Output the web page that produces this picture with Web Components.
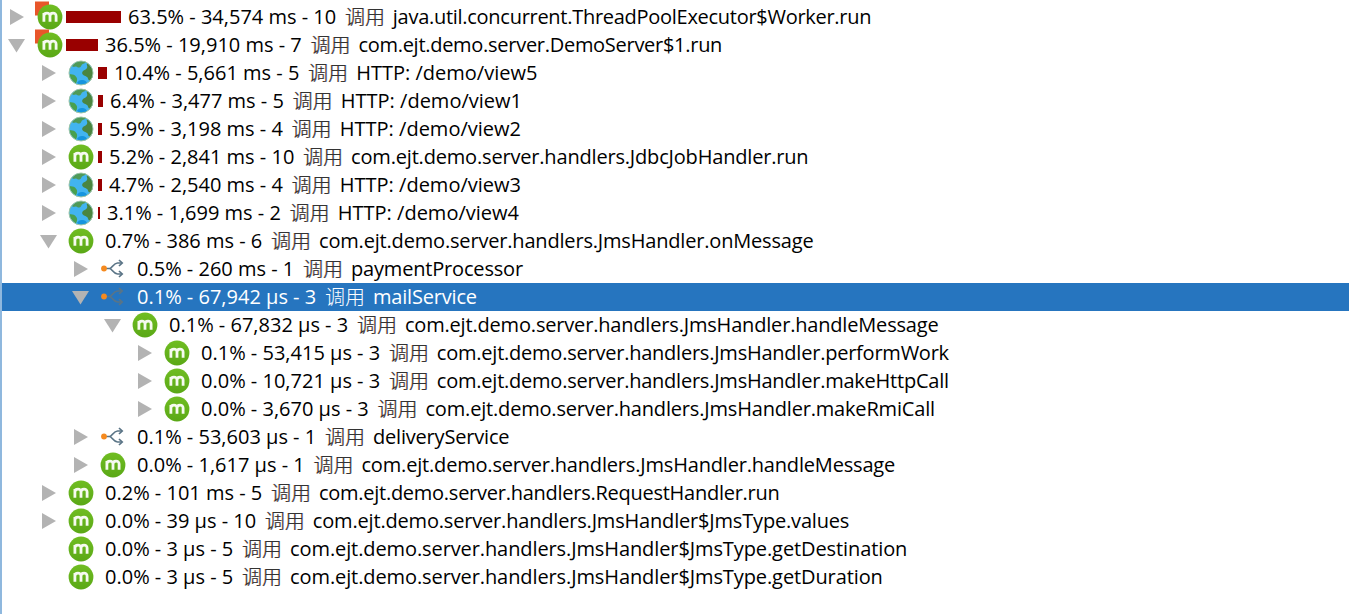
<!DOCTYPE html>
<html>
<head>
<meta charset="utf-8">
<title>Call tree</title>
<style>
  html, body { margin: 0; height: 100%; background: #fff; overflow: hidden; }
</style>
</head>
<body>
<call-tree>
  <tree-row depth="0" arrow="right" icon="hot" bar="55" ls="-0.28">63.5% - 34,574 ms - 10 |java.util.concurrent.ThreadPoolExecutor$Worker.run</tree-row>
  <tree-row depth="0" arrow="down" icon="hot" bar="32" ls="-0.28">36.5% - 19,910 ms - 7 |com.ejt.demo.server.DemoServer$1.run</tree-row>
  <tree-row depth="1" arrow="right" icon="globe" bar="9" ls="0">10.4% - 5,661 ms - 5 |HTTP: /demo/view5</tree-row>
  <tree-row depth="1" arrow="right" icon="globe" bar="5" ls="0">6.4% - 3,477 ms - 5 |HTTP: /demo/view1</tree-row>
  <tree-row depth="1" arrow="right" icon="globe" bar="4" ls="0">5.9% - 3,198 ms - 4 |HTTP: /demo/view2</tree-row>
  <tree-row depth="1" arrow="right" icon="m" bar="4">5.2% - 2,841 ms - 10 |com.ejt.demo.server.handlers.JdbcJobHandler.run</tree-row>
  <tree-row depth="1" arrow="right" icon="globe" bar="4" ls="0">4.7% - 2,540 ms - 4 |HTTP: /demo/view3</tree-row>
  <tree-row depth="1" arrow="right" icon="globe" bar="2" ls="0">3.1% - 1,699 ms - 2 |HTTP: /demo/view4</tree-row>
  <tree-row depth="1" arrow="down" icon="m">0.7% - 386 ms - 6 |com.ejt.demo.server.handlers.JmsHandler.onMessage</tree-row>
  <tree-row depth="2" arrow="right" icon="share">0.5% - 260 ms - 1 |paymentProcessor</tree-row>
  <tree-row depth="2" arrow="down" icon="share" selected>0.1% - 67,942 µs - 3 |mailService</tree-row>
  <tree-row depth="3" arrow="down" icon="m">0.1% - 67,832 µs - 3 |com.ejt.demo.server.handlers.JmsHandler.handleMessage</tree-row>
  <tree-row depth="4" arrow="right" icon="m" ls="-0.23">0.1% - 53,415 µs - 3 |com.ejt.demo.server.handlers.JmsHandler.performWork</tree-row>
  <tree-row depth="4" arrow="right" icon="m" ls="-0.23">0.0% - 10,721 µs - 3 |com.ejt.demo.server.handlers.JmsHandler.makeHttpCall</tree-row>
  <tree-row depth="4" arrow="right" icon="m">0.0% - 3,670 µs - 3 |com.ejt.demo.server.handlers.JmsHandler.makeRmiCall</tree-row>
  <tree-row depth="2" arrow="right" icon="share">0.1% - 53,603 µs - 1 |deliveryService</tree-row>
  <tree-row depth="2" arrow="right" icon="m">0.0% - 1,617 µs - 1 |com.ejt.demo.server.handlers.JmsHandler.handleMessage</tree-row>
  <tree-row depth="1" arrow="right" icon="m" ls="-0.26">0.2% - 101 ms - 5 |com.ejt.demo.server.handlers.RequestHandler.run</tree-row>
  <tree-row depth="1" arrow="right" icon="m">0.0% - 39 µs - 10 |com.ejt.demo.server.handlers.JmsHandler$JmsType.values</tree-row>
  <tree-row depth="1" icon="m" ls="-0.1">0.0% - 3 µs - 5 |com.ejt.demo.server.handlers.JmsHandler$JmsType.getDestination</tree-row>
  <tree-row depth="1" icon="m" ls="-0.1">0.0% - 3 µs - 5 |com.ejt.demo.server.handlers.JmsHandler$JmsType.getDuration</tree-row>
</call-tree>
<script>
class CallTree extends HTMLElement {
  constructor() {
    super();
    this.attachShadow({ mode: 'open' });
    this.shadowRoot.innerHTML = `
      <style>
        :host {
          display: block;
          height: 614px;
          box-sizing: border-box;
          padding-top: 3px;
          border-left: 2px solid #8fb8de;
          background: #fff;
          font-family: "Open Sans", sans-serif;
          font-size: 20px;
          color: #000;
        }
      </style>
      <slot></slot>
    `;
  }
}

const M_GLYPH = `
  <linearGradient id="mg" x1="0" y1="0" x2="0" y2="1">
    <stop offset="0" stop-color="#70bd22"/>
    <stop offset="1" stop-color="#5aa816"/>
  </linearGradient>
  <circle cx="13" cy="13" r="12.400" fill="url(#mg)"/>
  <path d="M6.900 17.800V9M6.900 12c0-3.800 6.100-4 6.100 0v5.800M13 12c0-3.800 6.100-4 6.100 0v5.800" fill="none" stroke="#f6faf0" stroke-width="2.800"/>`;

const M_ICON = `<svg viewBox="0 0 26 26" width="26" height="26">${M_GLYPH}</svg>`;

const HOT_ICON = `
  <svg viewBox="0 0 30 28" width="30" height="28" style="overflow:visible">
    <rect x="-1" y="-1.500" width="14" height="14" fill="#e8562a"/>
    <g transform="translate(1 1)">${M_GLYPH}</g>
  </svg>`;

const GLOBE_ICON = `
  <svg viewBox="0 0 26 26" width="26" height="26">
    <circle cx="13" cy="13" r="12" fill="#42b4f0"/>
    <path d="M4.500 5.500C7 2.500 10 1 13 1c1.500 0 3.500.3 5 1-1 1.500-3 1.500-4 2.500s-1 3-3 3-2-1.500-3.500-1-2.500 1-3.500-1z" fill="#4f9a58"/>
    <path d="M19 3c3 2 5.500 5 6 9 .3 3-.5 6-2 8-1.500 1-2.500.5-3-1.500s-2-2-4-3-2.500-3-1-4.500 3-1 4-3-1-3 0-5z" fill="#4a8540"/>
    <path d="M1.500 14c2 .5 4 0 5.500 1.500s2.500 3 2 5-.5 2.500-2 2.500C4 21 2 18 1.500 14z" fill="#48a04f"/>
    <path d="M9 23c1-2.500 3.500-3.500 6-3s3.500 2 4 3c-3 2-7 2.500-10 0z" fill="#1695de"/>
    <circle cx="13" cy="13" r="12" fill="none" stroke="#9cc4a4" stroke-width="1"/>
  </svg>`;

const SHARE_ICON = `
  <svg viewBox="0 0 26 20" width="26" height="20" style="overflow:visible">
    <path d="M6 9.500h3.500C12 9.500 13.500 4 17.500 4H22M9.500 9.500c2.500 0 4 5.500 8 5.500H22" fill="none" stroke="#5a7486" stroke-width="1.700"/>
    <path d="M19 1l3.200 3-3.200 3M19 12l3.200 3-3.200 3" fill="none" stroke="#5a7486" stroke-width="1.700"/>
    <circle cx="4" cy="9.500" r="2.900" fill="#f58a1f"/>
  </svg>`;

const ICONS = { m: M_ICON, hot: HOT_ICON, globe: GLOBE_ICON, share: SHARE_ICON };

class TreeRow extends HTMLElement {
  constructor() {
    super();
    this.attachShadow({ mode: 'open' });
  }

  connectedCallback() {
    const depth = Number(this.getAttribute('depth') || 0);
    const arrow = this.getAttribute('arrow');
    const icon = this.getAttribute('icon');
    const bar = Number(this.getAttribute('bar') || 0);
    const ls = this.getAttribute('ls') || '-0.18';
    const [stats, name] = this.textContent.split('|');
    const glyph = arrow === 'down'
      ? '<polygon points="-2,2 15,2 6.500,15.500" />'
      : '<polygon points="0,0 14,8 0,16" />';

    this.shadowRoot.innerHTML = `
      <style>
        :host {
          display: flex;
          align-items: center;
          height: 28px;
          padding-left: ${8 + depth * 32}px;
          white-space: pre;
          line-height: 28px;
        }
        :host([selected]) { background: #2675bf; color: #fff; }
        .arrow { width: 16px; height: 16px; margin-right: 10px; flex: none; overflow: visible; }
        .arrow polygon { fill: #b3b3b3; }
        .icon { display: flex; width: 30px; height: 28px; align-items: center; flex: none; }
        .bar { width: ${bar}px; height: 12px; background: #990000; margin: 0 7px 0 0; flex: none; }
        .gap { width: 7px; flex: none; }
        .cn {
          font-family: "Noto Sans CJK SC", sans-serif;
          font-size: 20px;
          font-weight: 300;
          margin: 0 3px 0 3.500px;
          color: #333;
          text-shadow: -0.4px 0 rgba(230, 120, 20, .55), 0.4px 0 rgba(30, 100, 200, .55);
        }
        .name { letter-spacing: ${ls}px; }
        :host([selected]) .cn { color: #fff; text-shadow: none; }
      </style>
      <svg class="arrow" viewBox="0 0 16 16">${arrow ? glyph : ''}</svg>
      <span class="icon">${ICONS[icon]}</span>
      ${bar ? '<span class="bar"></span>' : '<span class="gap"></span>'}
      <span>${stats}</span><span class="cn">调用</span><span class="name"> ${name}</span>
    `;
  }
}

customElements.define('call-tree', CallTree);
customElements.define('tree-row', TreeRow);
</script>
</body>
</html>
